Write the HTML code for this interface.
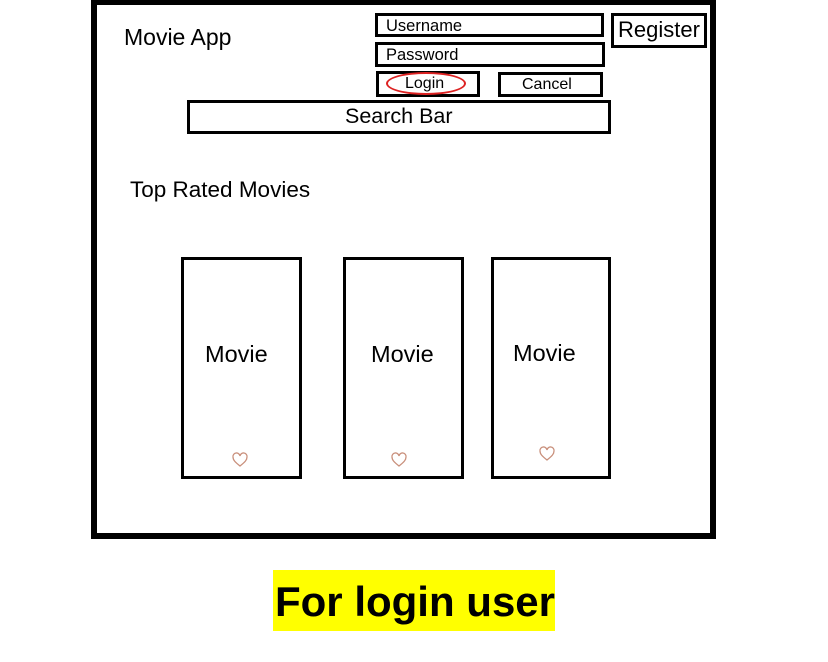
<!DOCTYPE html>
<html><head><style>
body{margin:0;width:828px;height:662px;background:#fff;position:relative;overflow:hidden;font-family:"Liberation Sans",sans-serif;color:#000}
.a{position:absolute;box-sizing:border-box}
.b{border:3px solid #000}
.t{position:absolute;white-space:nowrap}
</style></head><body>
<div class="a" style="left:91px;top:0;width:625px;height:539px;border:6px solid #000;border-top-width:5px"></div>
<div class="t" style="left:124px;top:24px;font-size:23px">Movie App</div>
<div class="a b" style="left:375px;top:13px;width:229px;height:24px"></div>
<div class="t" style="left:386px;top:17px;font-size:16.5px">Username</div>
<div class="a b" style="left:375px;top:42px;width:230px;height:25px"></div>
<div class="t" style="left:386px;top:46px;font-size:16.5px">Password</div>
<div class="a b" style="left:611px;top:13px;width:96px;height:35px"></div>
<div class="t" style="left:618px;top:17px;font-size:22px">Register</div>
<div class="a b" style="left:376px;top:71px;width:104px;height:26px"></div>
<div class="a" style="left:386px;top:72px;width:80px;height:23px;border:2px solid #d22;border-radius:50%"></div>
<div class="t" style="left:405px;top:75px;font-size:16px">Login</div>
<div class="a b" style="left:498px;top:72px;width:105px;height:25px"></div>
<div class="t" style="left:522px;top:76px;font-size:16px">Cancel</div>
<div class="a b" style="left:187px;top:100px;width:424px;height:34px"></div>
<div class="t" style="left:345px;top:104px;font-size:21.5px">Search Bar</div>
<div class="t" style="left:130px;top:177px;font-size:22.5px">Top Rated Movies</div>
<div class="a b" style="left:181px;top:257px;width:121px;height:222px"></div>
<div class="a b" style="left:343px;top:257px;width:121px;height:222px"></div>
<div class="a b" style="left:491px;top:257px;width:120px;height:222px"></div>
<div class="t" style="left:205px;top:341px;font-size:23.5px">Movie</div>
<div class="t" style="left:371px;top:341px;font-size:23.5px">Movie</div>
<div class="t" style="left:513px;top:340px;font-size:23.5px">Movie</div>
<svg class="a" style="left:232px;top:452px" width="16" height="16" viewBox="0 0 16 16"><path d="M8 14C3 10 1 8 1 5a3.3 3.3 0 0 1 7-1 3.3 3.3 0 0 1 7 1c0 3-2 5-7 9z" fill="none" stroke="#c9907c" stroke-width="1.3"/></svg>
<svg class="a" style="left:391px;top:452px" width="16" height="16" viewBox="0 0 16 16"><path d="M8 14C3 10 1 8 1 5a3.3 3.3 0 0 1 7-1 3.3 3.3 0 0 1 7 1c0 3-2 5-7 9z" fill="none" stroke="#c9907c" stroke-width="1.3"/></svg>
<svg class="a" style="left:539px;top:446px" width="16" height="16" viewBox="0 0 16 16"><path d="M8 14C3 10 1 8 1 5a3.3 3.3 0 0 1 7-1 3.3 3.3 0 0 1 7 1c0 3-2 5-7 9z" fill="none" stroke="#c9907c" stroke-width="1.3"/></svg>
<div class="a" style="left:273px;top:570px;width:282px;height:61px;background:#ffff00"></div>
<div class="t" style="left:275px;top:578px;font-size:42px;font-weight:bold">For login user</div>
</body></html>
